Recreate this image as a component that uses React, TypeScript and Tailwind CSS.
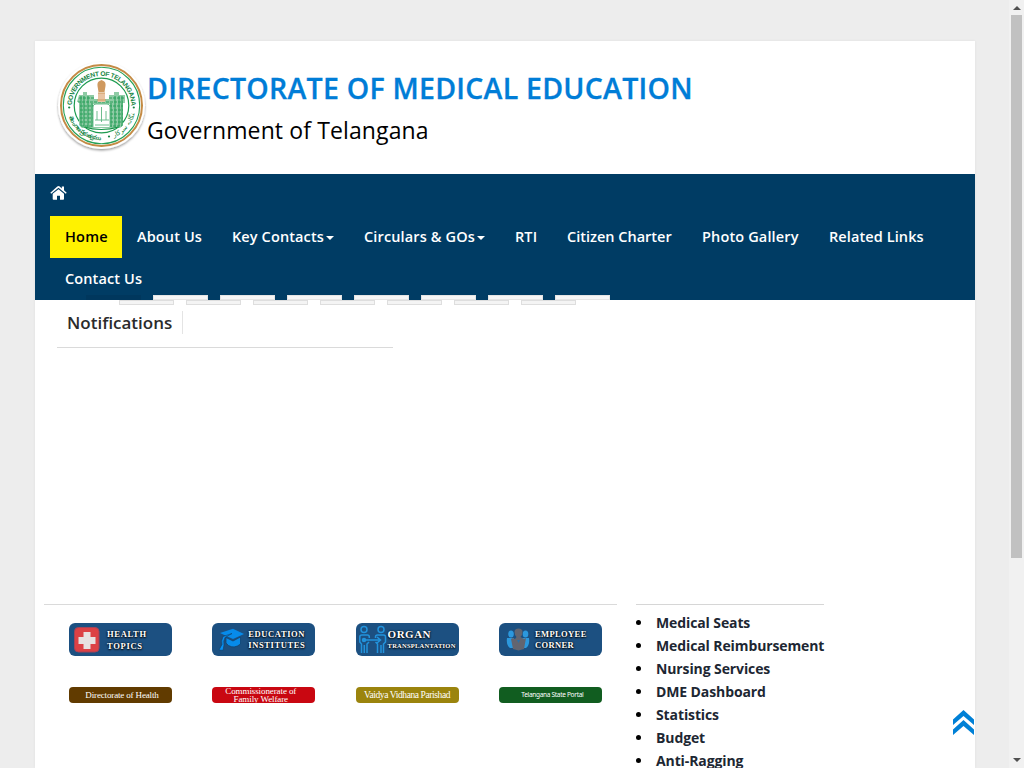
import React from "react";

const navItems = [
  { label: "Home", box: "w-[72px] bg-[#fff200] text-black", track: "tracking-[0.2px]" },
  { label: "About Us", box: "w-[95px] text-white", track: "tracking-[0.120px]" },
  { label: "Key Contacts", box: "w-[132px] text-white", track: "tracking-[0.120px]", caret: true },
  { label: "Circulars & GOs", box: "w-[151px] text-white", track: "tracking-[0.140px]", caret: true },
  { label: "RTI", box: "w-[52px] text-white", track: "tracking-[0.1px]" },
  { label: "Citizen Charter", box: "w-[135px] text-white", track: "tracking-[0px]" },
  { label: "Photo Gallery", box: "w-[127px] text-white", track: "tracking-[0.140px]" },
  { label: "Related Links", box: "w-[125px] text-white", track: "tracking-[0.100px]" },
  { label: "Contact Us", box: "w-[107px] text-white", track: "tracking-[0.120px]" },
];

const links = [
  "Medical Seats",
  "Medical Reimbursement",
  "Nursing Services",
  "DME Dashboard",
  "Statistics",
  "Budget",
  "Anti-Ragging",
];

function Seal() {
  return (
    <svg width="94" height="94" viewBox="0 0 94 94" className="block shrink-0">
      <defs>
        <filter id="sh" x="-10%" y="-10%" width="120%" height="125%">
          <feDropShadow dx="0" dy="1.5" stdDeviation="1.3" floodColor="#000" floodOpacity="0.4" />
        </filter>
        <path id="top" d="M 17.55 51.65 A 29.6 29.6 0 1 1 75.45 51.65" />
        <path id="lowL" d="M 14 56.5 A 34.3 34.3 0 0 0 49 79.7" />
        <path id="lowR" d="M 57 78.2 A 34.3 34.3 0 0 0 79.4 54.5" />
      </defs>
      <circle cx="46.5" cy="45.5" r="43.500" fill="#fff" filter="url(#sh)" />
      <circle cx="46.5" cy="45.5" r="40.500" fill="none" stroke="#c48b45" strokeWidth="2" />
      <circle cx="46.5" cy="45.5" r="38.2" fill="none" stroke="#26a158" strokeWidth="1.1" />
      <circle cx="46.5" cy="45.5" r="27.3" fill="#fff" stroke="#1d9b50" strokeWidth="1.2" />
      <text className="font-['Liberation_Sans'] font-bold" fontSize="6.6" fill="#158544">
        <textPath href="#top" startOffset="6.500" textLength="93">GOVERNMENT OF TELANGANA</textPath>
      </text>
      <text className="font-['Noto_Sans'] font-bold" fontSize="5.5" fill="#158544">
        <textPath href="#lowL" textLength="41">తెలంగాణ ప్రభుత్వము</textPath>
      </text>
      <text className="font-['DejaVu_Sans']" fontSize="6.500" fill="#158544">
        <textPath href="#lowR" startOffset="2">تلنگانہ سرکار</textPath>
      </text>
      <g fill="#158544">
        <circle cx="14.2" cy="47.5" r="1.1" />
        <circle cx="78.8" cy="47.5" r="1.1" />
        <circle cx="54" cy="76.5" r="1.1" />
      </g>
      <path d="M24 35h4v-3h4v3h7v4h15v-4h5v-3h5v3h6v6h-2v24l-3 3H27l-3-3V42h-2z" fill="#8fcba5" />
      <path d="M24 38h15M54 38h16M23 42h48M25 46h14M54 46h14M25 50h13M55 50h13M25 54h13M55 54h13M25 58h13M55 58h13M25 62h13M55 62h13M26 66h41" stroke="#2ba05b" strokeWidth="1" strokeDasharray="3 1" />
      <path d="M26 36v30M29 36v30M33 36v31M37 43v24M56 43v24M60 36v31M64 36v30M67 36v30" stroke="#2ba05b" strokeWidth="1.1" />
      <path d="M38 44h17v23H38z" fill="#fff" />
      <path d="M38 67V47q0-3 3-3h11q3 0 3 3v20M40 60h14M42 60v-9M46.5 62V47M51 60v-9M40 65h14" stroke="#5eb783" strokeWidth="0.9" fill="none" />
      <path d="M29 67q17 5 35 0" stroke="#159348" strokeWidth="1.2" fill="none" />
      <path d="M43 33h7v9h-7z" fill="#e9c4a3" />
      <path d="M42.500 26q-.5-4 2-5l2-1 2 1q2.500 1 2 5l-1 6h-6z" fill="#cf995f" />
      <path d="M43 33h7M42 40h9" stroke="#cf995f" strokeWidth="1" />
    </svg>
  );
}

function HealthIcon() {
  return (
    <svg width="26" height="26" viewBox="0 0 26 26" className="block shrink-0">
      <rect x="0.500" y="0.500" width="24.500" height="24.500" rx="4" fill="#dc4145" stroke="#a44358" />
      <path d="M9.500 5h7v5h5v7h-5v5h-7v-5h-5v-7h5z" fill="#e8e1e1" />
    </svg>
  );
}

function CapIcon() {
  return (
    <svg width="26" height="24" viewBox="0 0 26 24" className="block shrink-0">
      <path d="M2 5 15 .8 26 6 15 11z" fill="#078bea" />
      <path d="M8 9.500 15 13l7.500-4v7q-6 5-12 1.500L8 15z" fill="#078bea" stroke="#123f69" strokeWidth=".7" />
      <path d="M14 5.500 5 8.500q-2 4-1 8L1 22l4 .3L6 17q-1-4 1-7.500z" fill="#0791f4" stroke="#123f69" strokeWidth=".6" />
    </svg>
  );
}

function OrganIcon() {
  return (
    <svg width="28" height="30" viewBox="0 0 28 30" className="block shrink-0" fill="none" stroke="#2293dc" strokeWidth="1.500">
      <circle cx="5" cy="4.500" r="3" />
      <circle cx="22" cy="4.500" r="3" />
      <path d="M2.500 28V19L.8 17v-5q0-2 2-2h5.500q2 0 2 2v1M10 17l-2 2v9M5.300 28v-8M18.500 28v-9l-2-2M16.500 13v-1q0-2 2-2h6q2 0 2 2v5l-2 2v9M22 28v-8M5 15h16M18 12l3.500 3-3.500 3" />
      <circle cx="5" cy="15" r="1.500" fill="#2293dc" />
    </svg>
  );
}

function PeopleIcon() {
  return (
    <svg width="24" height="23" viewBox="0 0 24 23" className="block shrink-0">
      <g fill="#2c98dd">
        <ellipse cx="5" cy="6" rx="2.800" ry="3.500" />
        <ellipse cx="19.500" cy="6" rx="2.800" ry="3.500" />
        <path d="M1 10h7v10H4Q0 17 1 10zM16 10h7q1 7-3 10h-4z" />
      </g>
      <path d="M8.500 4q0-3.500 4-3.500t4 3.500-2 5l3.500 2 2-1-2 11-5.500 1.500L7 21 5 11l2-1 2 1 1.500-2Q8.500 7 8.500 4z" fill="#626570" />
      <path d="m11 12 1.500 3 1.500-3" fill="#2b70a7" />
    </svg>
  );
}

function Badge({ children }: { children: React.ReactNode }) {
  return (
    <div className="flex h-[33px] w-[103px] items-center overflow-hidden rounded-[6px] bg-[#1c5081] font-['Liberation_Serif',serif] font-bold text-white [text-shadow:0_1px_2px_#000,0_0_2px_#000]">
      {children}
    </div>
  );
}

export default function App() {
  return (
    <div className="flex h-[768px] w-[1024px] overflow-hidden bg-[#ededed] font-['Open_Sans',sans-serif]">
      <div className="w-[1009px] shrink-0 pt-[41px] pl-[35px]">
        <div className="relative h-[727px] w-[940px] bg-white shadow-[0_0_3px_rgba(0,0,0,0.06)]">
          <header className="flex h-[133px] pt-[19px] pl-5">
            <Seal />
            <div className="-ml-[2px] pt-[9px] whitespace-nowrap">
              <h1 className="h-[40px] text-[28.500px] leading-[38px] font-semibold tracking-[0.250px] text-[#007dd7] [-webkit-text-stroke:0.300px_#007dd7]">DIRECTORATE OF MEDICAL EDUCATION</h1>
              <p className="pt-[3px] text-[23px] leading-[36px] tracking-[0.120px] text-black">Government of Telangana</p>
            </div>
          </header>

          <nav className="relative h-[126px] bg-[#003c64] px-[15px]">
            <div className="flex h-[42px] pt-[11px]">
              <svg width="17" height="16" viewBox="0 0 17 16" fill="#fff" className="block">
                <path d="M8.500 4.200 14 8.700V14q0 .8-.8.800H10v-4H7v4H3.500q-.8 0-.8-.8V8.700z" />
                <path d="m.3 7.700 7-6.200q1.200-1 2.400 0L11.800 3.400V1.500H14v3.800l2.700 2.400-.9 1L8.500 2.800 1.200 8.700z" />
              </svg>
            </div>
            <ul className="flex flex-wrap">
              {navItems.map((n) => (
                <li key={n.label} className={`flex h-[42px] items-center px-[15px] text-[14.500px] font-semibold whitespace-nowrap ${n.box} ${n.track}`}>
                  {n.label}
                  {n.caret && <span className="mt-px ml-auto shrink-0 border-x-4 border-t-4 border-x-transparent border-t-white" />}
                </li>
              ))}
            </ul>
            <div className="absolute top-[121px] left-[51px] flex gap-3">
              {[0, 1, 2, 3, 4, 5, 6, 7].map((i) => (
                <span key={i} className={i === 0 ? "h-[5px] w-[55px] bg-[#00375d]" : "h-[5px] w-[55px] border border-b-0 border-[#e4e4e4] bg-[#f6f6f6] shadow-[inset_0_-1px_0_#e5e5e5]"} />
              ))}
            </div>
          </nav>

          <div className="flex h-[5px] gap-3 pl-[84px]">
            {[0, 1, 2, 3, 4, 5, 6].map((i) => (
              <span key={i} className="h-[5px] w-[55px] border border-[#dedede] bg-[#f4f4f4]" />
            ))}
          </div>

          <section className="ml-[22px] flex h-[43px] w-[336px] border-b border-[#dadada] pt-[6px]">
            <h2 className="h-[23px] w-[126px] border-r border-[#e4e4e4] pl-[10px] text-[17px] leading-[23px] font-semibold whitespace-nowrap text-[#2b2b2b]">Notifications</h2>
          </section>

          <div className="mt-[256px] flex items-start pl-[9px]">
            <section className="w-[573px] border-t border-[#dadada] pt-[18px] pl-[25px]">
              <div className="flex gap-[40.300px]">
                <Badge>
                  <span className="ml-[5px]"><HealthIcon /></span>
                  <span className="ml-[7px] text-[8.500px] leading-[12px] tracking-[0.700px]">HEALTH<br />TOPICS</span>
                </Badge>
                <Badge>
                  <span className="ml-[6px]"><CapIcon /></span>
                  <span className="ml-[4px] text-[8.500px] leading-[11px] tracking-[0.600px]">EDUCATION<br />INSTITUTES</span>
                </Badge>
                <Badge>
                  <span className="ml-[3px]"><OrganIcon /></span>
                  <span className="ml-px leading-[12px] whitespace-nowrap"><span className="text-[11px] tracking-[0.500px]">ORGAN</span><br /><span className="block text-[6.500px] tracking-[0.240px]">TRANSPLANTATION</span></span>
                </Badge>
                <Badge>
                  <span className="ml-[7px]"><PeopleIcon /></span>
                  <span className="ml-[5px] text-[8.500px] leading-[11px] tracking-[0.400px]">EMPLOYEE<br />CORNER</span>
                </Badge>
              </div>
              <div className="mt-[31px] flex gap-[40.300px] text-center font-['Liberation_Serif',serif] text-[9px] leading-[16px] whitespace-nowrap text-white">
                <div className="h-4 w-[103px] rounded-[4px] bg-[#613b00] pl-[3px] tracking-[-0.150px]">Directorate of Health</div>
                <div className="h-4 w-[103px] overflow-hidden rounded-[4px] bg-[#c90711] pr-[6px] leading-[8px] tracking-[-0.100px]">Commissionerate of<br />Family Welfare</div>
                <div className="h-4 w-[103px] rounded-[4px] bg-[#9b840d] text-[9.500px] tracking-[-0.400px]">Vaidya Vidhana Parishad</div>
                <div className="h-4 w-[103px] rounded-[4px] bg-[#115d20] pl-1 font-['Noto_Sans',sans-serif] text-[6.500px] tracking-[-0.300px]">Telangana State Portal</div>
              </div>
            </section>
            <section className="ml-[19px] h-[163px] w-[188px] border-t border-[#d6d6d6] pt-[6px]">
              <ul className="text-[14px] leading-[23px] font-bold tracking-[-0.110px] whitespace-nowrap text-[#1d2733]">
                {links.map((l) => (
                  <li key={l} className="flex items-center">
                    <span className="mr-[15px] size-[5px] shrink-0 rounded-full bg-black" />
                    {l}
                  </li>
                ))}
              </ul>
            </section>
          </div>
          <a href="#" className="absolute top-[669px] left-[918px]">
            <svg width="21" height="25" viewBox="0 0 21 25" fill="#0080d6" className="block">
              <path d="M10.500 0 21 9.500V15L10.500 6 0 15V9.500z" />
              <path d="M10.500 10 21 19.500V25L10.500 16 0 25V19.500z" />
            </svg>
          </a>
        </div>
      </div>
      <div className="flex w-[15px] flex-col items-center bg-[#f1f1f1]">
        <div className="flex h-[15px] items-center pt-px">
          <span className="border-x-4 border-b-4 border-x-transparent border-b-[#505050]" />
        </div>
        <div className="h-[543px] w-[11px] bg-[#c1c1c1]" />
        <div className="mt-[195px] flex h-[15px] items-center">
          <span className="mb-px border-x-4 border-t-4 border-x-transparent border-t-[#505050]" />
        </div>
      </div>
    </div>
  );
}
